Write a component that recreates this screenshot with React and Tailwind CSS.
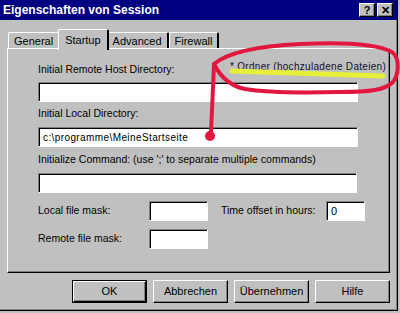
import React from 'react'

const FONT = { fontFamily: '"Liberation Sans", Arial, sans-serif' }

const sunken =
  'bg-white border border-t-[#808080] border-l-[#808080] border-b-white border-r-white shadow-[inset_1px_1px_0_#000]'
const raised =
  'bg-[#c0c0c0] border border-t-white border-l-white border-b-black border-r-black shadow-[inset_-1px_-1px_0_#808080]'

function Field({ className = '', children }) {
  return (
    <div className={`${sunken} h-[20px] flex items-center pl-[4px] text-[10px] tracking-[0.4px] text-black ${className}`}>
      {children}
    </div>
  )
}

function Tab({ label, active }) {
  if (active) {
    return (
      <div className="relative z-10 -mx-[2px] h-[21px] px-[6px] pt-[3px] bg-[#c0c0c0] border-l border-t border-white border-r-2 border-r-black rounded-t-[2px] text-[11px] leading-[15px]">
        {label}
      </div>
    )
  }
  return (
    <div className="mt-[3px] h-[16px] px-[5px] pt-[1px] bg-[#c0c0c0] border-l border-t border-white border-r-2 border-r-black rounded-t-[2px] text-[11px] leading-[14px]">
      {label}
    </div>
  )
}

function Button({ label, isDefault }) {
  return (
    <div className={`w-[75px] h-[23px] ${isDefault ? 'border border-black' : ''}`}>
      <div className={`${raised} w-full h-full flex items-center justify-center text-[11px]`}>{label}</div>
    </div>
  )
}

function Annotation() {
  return (
    <svg className="absolute inset-0 pointer-events-none" width="400" height="313" viewBox="0 0 400 313">
      <path d="M232,71 L383,76" stroke="#e6ef3a" strokeWidth="5" strokeLinecap="round" fill="none" />
      <path
        d="M214,64 C228,52 262,46 300,44 C340,42 375,43 392,52 C400,58 399,74 393,82 C385,90 370,92 340,92 C300,93 262,92 245,89 C230,86 220,76 214,64"
        stroke="#e2173e"
        strokeWidth="4"
        fill="none"
        strokeLinecap="round"
      />
      <path d="M214,64 L211,133" stroke="#e2173e" strokeWidth="4" strokeLinecap="round" fill="none" />
      <circle cx="210" cy="136" r="5" fill="#e2173e" />
    </svg>
  )
}

export default function App() {
  return (
    <div className="relative w-[400px] h-[313px] bg-[#c0c0c0] overflow-hidden text-black" style={FONT}>
      <div className="w-[398px] h-[311px] border-r border-b border-black shadow-[inset_-1px_-1px_0_#808080] flex flex-col">
        {/* title bar */}
        <div className="h-[20px] bg-[#000080] flex items-center justify-between pl-[3px] pr-[4px]">
          <span className="text-white font-bold text-[12px]">Eigenschaften von Session</span>
          <div className="flex gap-[2px]">
            <div className={`${raised} w-[16px] h-[14px] flex items-center justify-center text-[11px] font-bold leading-none`}>?</div>
            <div className={`${raised} w-[16px] h-[14px] flex items-center justify-center text-[11px] font-bold leading-none`}>✕</div>
          </div>
        </div>

        {/* tabs */}
        <div className="flex items-start pl-[8px] mt-[9px] h-[19px]">
          <Tab label="General" />
          <Tab label="Startup" active />
          <Tab label="Advanced" />
          <Tab label="Firewall" />
        </div>

        {/* panel */}
        <div className="ml-[7px] w-[383px] h-[225px] border-l border-t border-white border-r border-b border-r-black border-b-black shadow-[inset_-1px_-1px_0_#808080] pl-[30px] pt-[13px] text-[10.5px]">
          <div className="h-[15px] leading-[15px]">Initial Remote Host Directory:</div>
          <Field className="mt-[5px] w-[320px]" />
          <div className="mt-[4px] h-[15px] leading-[15px]">Initial Local Directory:</div>
          <Field className="mt-[6px] w-[320px]">c:\programme\MeineStartseite</Field>
          <div className="mt-[5px] h-[15px] leading-[15px]">Initialize Command: (use ';' to separate multiple commands)</div>
          <Field className="mt-[6px] w-[319px]" />
          <div className="mt-[8px] flex items-center h-[20px]">
            <span className="w-[111px]">Local file mask:</span>
            <Field className="w-[59px]" />
            <span className="ml-[13px] w-[105px]">Time offset in hours:</span>
            <Field className="w-[39px] text-[11px]">0</Field>
          </div>
          <div className="mt-[8px] flex items-center h-[20px]">
            <span className="w-[111px]">Remote file mask:</span>
            <Field className="w-[59px]" />
          </div>
        </div>

        {/* buttons */}
        <div className="mt-[7px] flex justify-end gap-[6px] pr-[7px]">
          <Button label="OK" isDefault />
          <Button label="Abbrechen" />
          <Button label="Übernehmen" />
          <Button label="Hilfe" />
        </div>
      </div>

      <div className="absolute left-[230px] top-[59px] text-[10px] tracking-[0.3px] text-[#101030]">* Ordner (hochzuladene Dateien)</div>
      <Annotation />
    </div>
  )
}
